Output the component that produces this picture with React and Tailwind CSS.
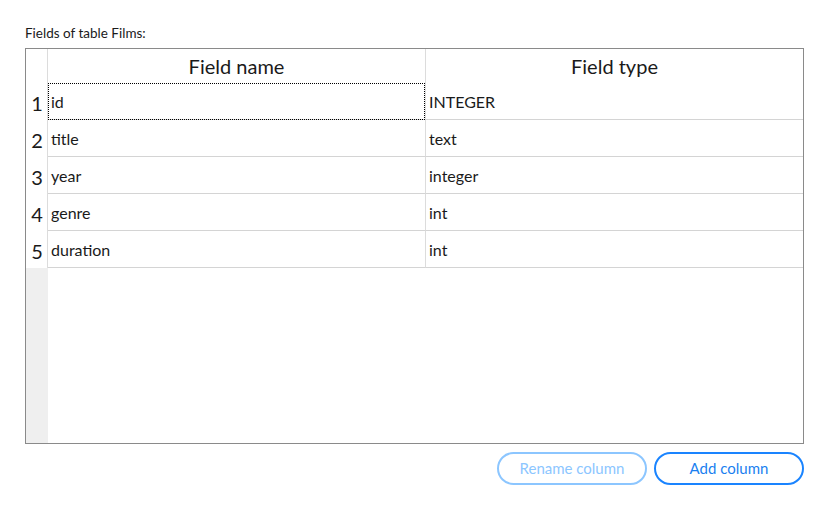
import React from "react";

const rows = [
  ["id", "INTEGER"],
  ["title", "text"],
  ["year", "integer"],
  ["genre", "int"],
  ["duration", "int"],
];

export default function App() {
  return (
    <div
      className="w-[829px] h-[506px] bg-white text-[#1a1a1a] px-[25px] pt-[24px]"
      style={{ fontFamily: "Lato, 'Noto Sans', sans-serif" }}
    >
      <div className="text-[13.5px] leading-[18px] h-[24px]">Fields of table Films:</div>
      <div className="w-[779px] h-[396px] border border-[#8a8a8a] flex flex-col">
        <div className="flex h-[34px]">
          <div className="w-[22px] border-r border-[#dcdcdc]" />
          <div className="w-[378px] border-r border-[#dcdcdc] flex items-center justify-center text-[20px]">
            Field name
          </div>
          <div className="flex-1 flex items-center justify-center text-[20px]">Field type</div>
        </div>
        {rows.map(([n, t], i) => (
          <div key={n} className="flex h-[37px]">
            <div className="w-[22px] border-r border-[#dcdcdc] flex items-center justify-center text-[20px] pl-[1px] pt-[2px]">
              {i + 1}
            </div>
            <div className="w-[378px] border-r border-[#dcdcdc] border-b border-b-[#d4d4d4] relative flex items-center pl-[3px] text-[16px] pt-[2px]">
              {i === 0 && (
                <div className="absolute left-0 top-0 right-0 bottom-[-1px] border border-dotted border-black" />
              )}
              {n}
            </div>
            <div className="flex-1 border-b border-[#d4d4d4] flex items-center pl-[3px] text-[16px] pt-[2px]">{t}</div>
          </div>
        ))}
        <div className="flex flex-1">
          <div className="w-[22px] bg-[#efefef]" />
          <div className="flex-1" />
        </div>
      </div>
      <div className="w-[779px] flex justify-end gap-[7px] mt-[8px]">
        <button className="w-[150px] h-[33px] rounded-full border-2 border-[#8cc6ff] text-[#8cc6ff] text-[15px] bg-white">
          Rename column
        </button>
        <button className="w-[150px] h-[33px] rounded-full border-2 border-[#1a84ff] text-[#1a7ff0] text-[15px] bg-white">
          Add column
        </button>
      </div>
    </div>
  );
}
